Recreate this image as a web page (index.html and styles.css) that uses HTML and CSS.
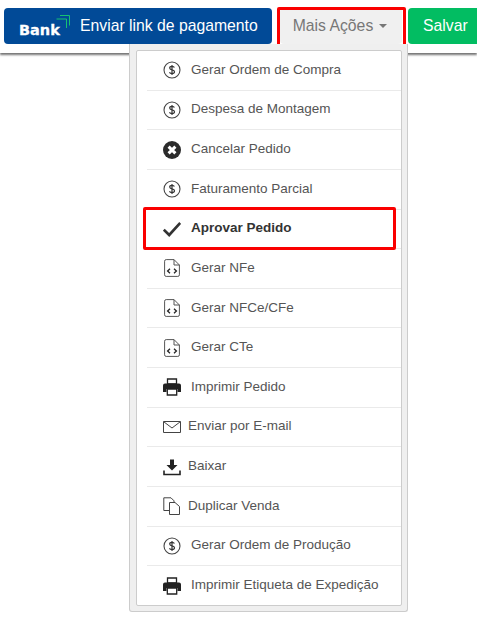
FILE: index.html
```html
<!DOCTYPE html>
<html lang="pt-BR">
<head>
<meta charset="utf-8">
<title>Mais Ações</title>
<link rel="stylesheet" href="styles.css">
</head>
<body>
<svg class="sprites" width="0" height="0" aria-hidden="true">
  <symbol id="i-dollar" viewBox="0 0 18 18">
    <circle cx="9" cy="9" r="8" fill="none" stroke="#444" stroke-width="1.1"/>
    <path d="M11.4 6.6C11 5.7 10 5.4 9 5.4c-1.3 0-2.3.6-2.3 1.7 0 2.5 4.8 1.2 4.8 3.7 0 1.1-1 1.8-2.5 1.8-1.1 0-2.1-.4-2.6-1.2M9 4v10" fill="none" stroke="#333" stroke-width="1.2"/>
  </symbol>
  <symbol id="i-xml" viewBox="0 0 16 18">
    <path d="M.6 2.2Q.6.6 2.2.6H10L15.4 6V15.8Q15.4 17.4 13.8 17.4H2.2Q.6 17.4.6 15.8Z" fill="none" stroke="#555" stroke-width="1"/>
    <path d="M10 .6V6H15.4" fill="none" stroke="#555" stroke-width="1"/>
    <path d="M6 9.8 3.6 12 6 14.2M10 9.8 12.4 12 10 14.2" fill="none" stroke="#222" stroke-width="1.3"/>
  </symbol>
  <symbol id="i-print" viewBox="0 0 18 18">
    <path d="M4.5 1H13.5V6H4.5Z" fill="#fff" stroke="#222" stroke-width="1.3"/>
    <path d="M2 5.5H16Q18 5.5 18 7.5V14H14.5V11H3.5V14H0V7.5Q0 5.5 2 5.5Z" fill="#222"/>
    <path d="M4.3 11H13.7V17H4.3Z" fill="#fff" stroke="#222" stroke-width="1.3"/>
  </symbol>
</svg>

<header class="topbar">
  <button class="btn btn-bank" type="button">
    <span class="bank-logo">
      <span class="bank-word">Bank</span>
      <svg class="bank-arrows" width="14" height="14" viewBox="0 0 14 14" aria-hidden="true">
        <path d="M4 .5H13.5V10.5M.5 4H10.5V13" fill="none" stroke="#16c172" stroke-width="1"/>
      </svg>
    </span>
    <span>Enviar link de pagamento</span>
  </button>
  <button class="btn btn-more" type="button">Mais Ações <span class="caret"></span></button>
  <button class="btn btn-save" type="button">Salvar</button>
</header>
<span class="mark mark-more"></span>

<nav class="menu">
  <ul class="menu-list">
    <li class="item"><svg class="ico"><use href="#i-dollar"/></svg><span class="label">Gerar Ordem de Compra</span></li>
    <li class="item"><svg class="ico"><use href="#i-dollar"/></svg><span class="label">Despesa de Montagem</span></li>
    <li class="item"><svg class="ico" viewBox="0 0 18 18"><circle cx="9" cy="9" r="9" fill="#2b2b2b"/><path d="M5.6 5.6 12.4 12.4M12.4 5.6 5.6 12.4" stroke="#fff" stroke-width="3"/></svg><span class="label">Cancelar Pedido</span></li>
    <li class="item"><svg class="ico"><use href="#i-dollar"/></svg><span class="label">Faturamento Parcial</span></li>
    <li class="item item-strong"><svg class="ico" viewBox="0 0 18 18"><path d="M.8 9.6 6.2 15 17.2 3" fill="none" stroke="#333" stroke-width="2.6"/></svg><span class="label">Aprovar Pedido</span><span class="mark mark-item"></span></li>
    <li class="item"><svg class="ico"><use href="#i-xml"/></svg><span class="label">Gerar NFe</span></li>
    <li class="item"><svg class="ico"><use href="#i-xml"/></svg><span class="label">Gerar NFCe/CFe</span></li>
    <li class="item"><svg class="ico"><use href="#i-xml"/></svg><span class="label">Gerar CTe</span></li>
    <li class="item"><svg class="ico"><use href="#i-print"/></svg><span class="label">Imprimir Pedido</span></li>
    <li class="item item-tight"><svg class="ico" viewBox="0 0 18 18"><path d="M.5 3.5H17.5V14.5H.5ZM.8 3.8 9 10 17.2 3.8" fill="none" stroke="#444" stroke-width="1"/></svg><span class="label">Enviar por E-mail</span></li>
    <li class="item item-tight"><svg class="ico" viewBox="0 0 18 18"><path d="M7 1.5H11V7H14.5L9 12.5 3.5 7H7Z" fill="#222"/><path d="M1 12.5V16.5H17V12.5" fill="none" stroke="#222" stroke-width="1.6"/></svg><span class="label">Baixar</span></li>
    <li class="item item-tight"><svg class="ico" viewBox="0 0 18 18"><path d="M6.5 13.5H.8V.8H8L11 3.8V5M6.5 5.5H12L16.5 9.5V17.5H6.5Z" fill="none" stroke="#444" stroke-width="1"/></svg><span class="label">Duplicar Venda</span></li>
    <li class="item"><svg class="ico"><use href="#i-dollar"/></svg><span class="label">Gerar Ordem de Produção</span></li>
    <li class="item"><svg class="ico"><use href="#i-print"/></svg><span class="label">Imprimir Etiqueta de Expedição</span></li>
  </ul>
</nav>
</body>
</html>
```
FILE: styles.css
```css
* { box-sizing: border-box; }
html, body { margin: 0; height: 100%; overflow: hidden; background: #fff; }
body { font-family: "Liberation Sans", Arial, sans-serif; position: relative; }
.sprites { position: absolute; }

.topbar {
  display: flex;
  align-items: flex-start;
  gap: 8px;
  height: 53px;
  padding: 8px 0 0 4px;
  background: #fff;
  box-shadow: 0 2px 2px rgba(0, 0, 0, .55);
}
.btn {
  flex: none;
  height: 36px;
  border: 0;
  border-radius: 4px;
  font: 15.75px "Liberation Sans", Arial, sans-serif;
  padding: 0;
  display: flex;
  align-items: center;
}
.btn-bank { width: 268px; background: #014a97; color: #fff; padding-left: 15px; gap: 9px; }
.bank-logo { position: relative; display: block; width: 52px; height: 24px; }
.bank-word { position: absolute; left: 0; bottom: 0; font: 700 14.5px/16px "DejaVu Sans", sans-serif; -webkit-text-stroke: .3px #fff; }
.bank-arrows { position: absolute; right: 1px; top: 1px; }
.btn-more {
  width: 122px;
  background: #f0f0f0;
  color: #777;
  justify-content: center;
  gap: 1px;
  padding-right: 2px;
}
.caret {
  margin-left: 5px;
  border-top: 4px solid #777;
  border-left: 4px solid transparent;
  border-right: 4px solid transparent;
}
.btn-save { width: 90px; background: #02bd62; color: #fff; padding-left: 15px; margin-left: -2px; }

.mark { position: absolute; border: 3px solid #fa0000; border-radius: 2px; pointer-events: none; }
.mark-more { left: 277px; top: 7px; width: 129px; height: 41px; }
.mark-item { left: -4px; top: -3px; width: 253px; height: 43px; }

.menu {
  position: absolute;
  left: 129px;
  top: 44px;
  width: 279px;
  height: 568px;
  padding: 6px 5px 5px 6px;
  background: #efefef;
  border: 1px solid #ccc;
  border-top: 0;
  border-radius: 0 0 3px 3px;
}
.menu-list {
  margin: 0;
  height: 100%;
  padding: 0 0 0 10px;
  list-style: none;
  background: #fff;
  border: 1px solid #ccc;
  border-radius: 2px;
}
.item {
  position: relative;
  display: flex;
  align-items: center;
  height: 39.64px;
  padding: 0 0 0 16px;
  color: #555;
  font-size: 13.5px;
  border-bottom: 1px solid #eaeaea;
}
.item:last-child { border-bottom: 0; }
.ico { flex: none; width: 18px; height: 18px; margin-right: 10px; }
.item-tight .ico { margin-right: 7px; }
.label { white-space: nowrap; position: relative; top: -1px; }
.item-strong { color: #333; font-weight: 700; }
```
